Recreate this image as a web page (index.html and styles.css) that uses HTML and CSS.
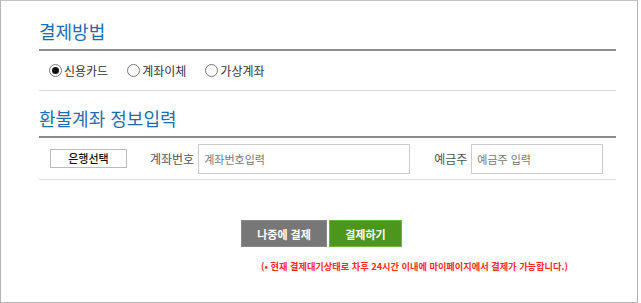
FILE: index.html
```html
<!DOCTYPE html>
<html lang="ko">
<head>
    <meta charset="UTF-8">
    <meta name="viewport" content="width=device-width, initial-scale=1.0">
    <title>결제방법</title>
    <link rel="stylesheet" href="styles.css">
</head>
<body>
    <div class="pay-box">
        <!-- 결제방법 -->
        <h2 class="sec-title">결제방법</h2>
        <div class="pay-methods">
            <label class="radio"><span class="dot checked"></span>신용카드</label>
            <label class="radio"><span class="dot"></span>계좌이체</label>
            <label class="radio"><span class="dot"></span>가상계좌</label>
        </div>

        <!-- 환불계좌 -->
        <h2 class="sec-title second">환불계좌 정보입력</h2>
        <div class="refund-row">
            <div class="bank-select">은행선택</div>
            <span class="field-label">계좌번호</span>
            <input type="text" class="field acct" placeholder="계좌번호입력">
            <span class="field-label owner">예금주</span>
            <input type="text" class="field name" placeholder="예금주 입력">
        </div>

        <div class="actions">
            <button class="btn later">나중에 결제</button>
            <button class="btn pay">결제하기</button>
        </div>
        <p class="notice">(• 현재 결제대기상태로 차후 24시간 이내에 마이페이지에서 결제가 가능합니다.)</p>
    </div>
</body>
</html>
```

FILE: styles.css
```css
/* 기본 */
body {
    margin: 0;
    padding: 0;
    background: #fff;
    font-family: "Noto Sans CJK KR", "Noto Sans", sans-serif;
    color: #333;
}

.pay-box {
    width: 577px;
    height: 301px;
    border: 1px solid #b4b4b4;
    border-top-color: #c4c4c4;
    padding: 0 21px 0 38px;
}

.sec-title {
    margin: 17px 0 0;
    padding-bottom: 5px;
    font-size: 18px;
    line-height: 26px;
    font-weight: normal;
    color: #1d6db5;
    border-bottom: 2px solid #8c8c8c;
}

.sec-title.second {
    margin-top: 14px;
}

/* 라디오 */
.pay-methods {
    display: flex;
    align-items: center;
    height: 39px;
    padding-left: 10px;
    border-bottom: 1px solid #dcdcdc;
    font-size: 12px;
    color: #333;
}

.radio {
    display: flex;
    align-items: center;
    margin-right: 19px;
}

.dot {
    width: 11px;
    height: 11px;
    border: 1px solid #777;
    border-radius: 50%;
    margin-right: 2px;
    position: relative;
    background: #fff;
}

.dot.checked::after {
    content: "";
    position: absolute;
    left: 2px;
    top: 2px;
    width: 7px;
    height: 7px;
    border-radius: 50%;
    background: #111;
}

/* 환불계좌 */
.refund-row {
    display: flex;
    align-items: center;
    height: 41px;
    border-bottom: 1px solid #dcdcdc;
}

.bank-select {
    width: 75px;
    height: 17px;
    margin-left: 11px;
    border: 1px solid #bbb;
    font-size: 11px;
    font-weight: 500;
    line-height: 17px;
    text-align: center;
    color: #111;
}

.field-label {
    margin-left: 23px;
    margin-right: 4px;
    font-size: 12px;
    color: #555;
}

.field-label.owner {
    margin-left: 24px;
}

.field {
    height: 30px;
    box-sizing: border-box;
    border: 1px solid #ccc;
    padding: 0 5px;
    font-family: inherit;
    font-size: 11px;
    color: #333;
    outline: none;
}

.field::placeholder {
    color: #777;
}

.field.acct {
    width: 212px;
}

.field.name {
    width: 132px;
}

/* 버튼 */
.actions {
    display: flex;
    justify-content: center;
    gap: 2px;
    margin-top: 40px;
    padding-right: 12px;
}

.btn {
    height: 27px;
    border: 1px solid;
    color: #fff;
    font-family: inherit;
    font-size: 11px;
    font-weight: bold;
    padding: 0;
    cursor: pointer;
}

.btn.later {
    width: 86px;
    background: #777;
    border-color: #8a8a8a;
}

.btn.pay {
    width: 73px;
    background: #4d961d;
    border-color: #6db63c;
}

.notice {
    margin: 12px 0 0;
    padding-left: 222px;
    font-size: 9.2px;
    font-weight: bold;
    color: #ff2b2b;
}
```
